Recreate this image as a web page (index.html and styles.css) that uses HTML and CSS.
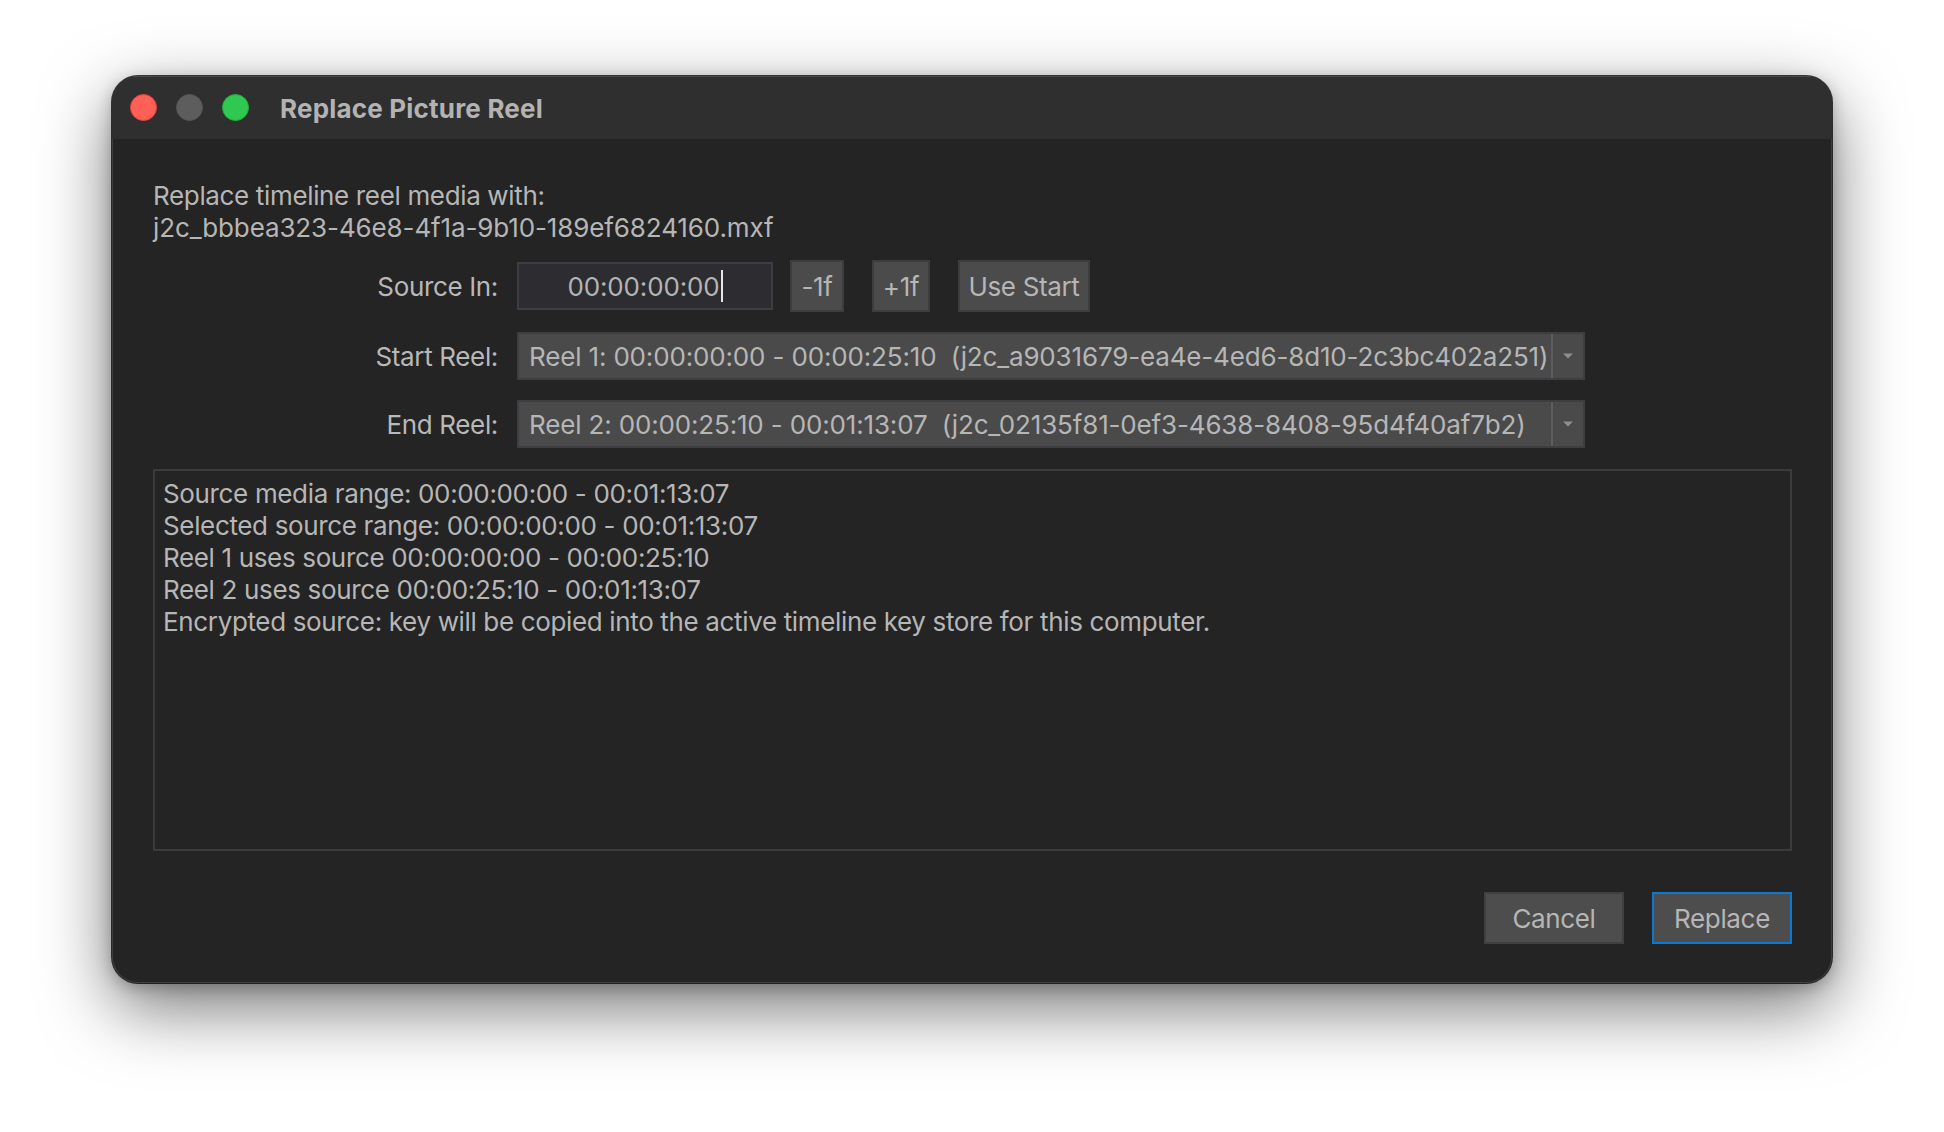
FILE: index.html
```html
<!DOCTYPE html>
<html lang="en">
<head>
<meta charset="utf-8">
<title>Replace Picture Reel</title>
<link rel="stylesheet" href="styles.css">
</head>
<body>
<div class="window">
  <div class="titlebar">
    <div class="lights">
      <span class="light light-red"></span>
      <span class="light light-gray"></span>
      <span class="light light-green"></span>
    </div>
    <div class="title">Replace Picture Reel</div>
  </div>
  <div class="content">
    <div class="intro">
      <div>Replace timeline reel media with:</div>
      <div class="filename">j2c_bbbea323-46e8-4f1a-9b10-189ef6824160.mxf</div>
    </div>
    <div class="form">
      <div class="row row-source">
        <div class="label">Source In:</div>
        <div class="field"><span class="field-text">00:00:00:00</span><span class="caret"></span></div>
        <button class="btn btn-minus">-1f</button>
        <button class="btn btn-plus">+1f</button>
        <button class="btn btn-usestart">Use Start</button>
      </div>
      <div class="row row-reel">
        <div class="label">Start Reel:</div>
        <div class="combo">
          <span class="combo-text">Reel 1: 00:00:00:00 - 00:00:25:10  (j2c_a9031679-ea4e-4ed6-8d10-2c3bc402a251)</span>
          <span class="combo-drop"><svg class="arrow" width="10" height="6" viewBox="0 0 10 6"><path d="M0 0.5 L10 0.5 L5 5.5 Z" fill="#8e8e8e"/></svg></span>
        </div>
      </div>
      <div class="row row-reel">
        <div class="label">End Reel:</div>
        <div class="combo">
          <span class="combo-text">Reel 2: 00:00:25:10 - 00:01:13:07  (j2c_02135f81-0ef3-4638-8408-95d4f40af7b2)</span>
          <span class="combo-drop"><svg class="arrow" width="10" height="6" viewBox="0 0 10 6"><path d="M0 0.5 L10 0.5 L5 5.5 Z" fill="#8e8e8e"/></svg></span>
        </div>
      </div>
    </div>
    <div class="log">
      <div>Source media range: 00:00:00:00 - 00:01:13:07</div>
      <div>Selected source range: 00:00:00:00 - 00:01:13:07</div>
      <div>Reel 1 uses source 00:00:00:00 - 00:00:25:10</div>
      <div>Reel 2 uses source 00:00:25:10 - 00:01:13:07</div>
      <div>Encrypted source: key will be copied into the active timeline key store for this computer.</div>
    </div>
    <div class="footer">
      <button class="btn btn-dialog">Cancel</button>
      <button class="btn btn-dialog btn-default">Replace</button>
    </div>
  </div>
</div>
</body>
</html>
```

FILE: styles.css
```css
html, body {
  margin: 0;
  padding: 0;
}

body {
  background: #ffffff;
  width: 1944px;
  height: 1132px;
  overflow: hidden;
  font-family: "Inter", "Liberation Sans", sans-serif;
  font-size: 26px;
  letter-spacing: -0.35px;
  color: #b6b6b6;
}

.window {
  margin: 76px 0 0 112px;
  width: 1720px;
  height: 907px;
  border-radius: 26px;
  overflow: hidden;
  background: #242424;
  box-shadow:
    0 0 0 1px rgba(0, 0, 0, 0.75),
    inset 0 0 0 1px rgba(255, 255, 255, 0.12),
    0 24px 70px rgba(0, 0, 0, 0.55),
    0 4px 16px rgba(0, 0, 0, 0.25);
  display: flex;
  flex-direction: column;
}

.titlebar {
  height: 63px;
  flex: none;
  background: #2f2f2f;
  display: flex;
  align-items: center;
  box-shadow: inset 0 1px 0 rgba(255, 255, 255, 0.12);
}

.lights {
  display: flex;
  gap: 19px;
  padding-left: 18px;
}

.light {
  width: 27px;
  height: 27px;
  border-radius: 50%;
  box-sizing: border-box;
}

.light-red {
  background: #fe5f57;
  border: 1px solid #e0443e;
}

.light-gray {
  background: #5d5d5d;
  border: 1px solid #555555;
}

.light-green {
  background: #2fc850;
  border: 1px solid #27aa40;
}

.title {
  margin-left: 31px;
  font-weight: 700;
  font-size: 26px;
  letter-spacing: 0.2px;
  color: #b3b3b3;
  padding-top: 1px;
}

.content {
  flex: 1;
  padding: 41px 40px 39px 41px;
  display: flex;
  flex-direction: column;
}

.intro {
  line-height: 32px;
}

.filename {
  letter-spacing: -0.12px;
}

.form {
  margin-top: 16px;
  display: flex;
  flex-direction: column;
  gap: 20px;
}

.row {
  display: flex;
  align-items: center;
}

.row-source {
  height: 52px;
}

.row-reel {
  height: 48px;
}

.label {
  width: 345px;
  margin-right: 19px;
  text-align: right;
  color: #b8b8b8;
  flex: none;
}

.field {
  width: 256px;
  height: 48px;
  box-sizing: border-box;
  background: #2c2c31;
  border: 2px solid #3d3d42;
  display: flex;
  align-items: center;
  justify-content: center;
  color: #b4b4b4;
  letter-spacing: -0.15px;
}

.caret {
  width: 2px;
  height: 32px;
  background: #e6e6e6;
  margin-left: 1px;
}

.btn {
  font-family: "Inter", "Liberation Sans", sans-serif;
  font-size: 26px;
  letter-spacing: -0.35px;
  color: #b6b6b6;
  background: #4b4b4b;
  border: 2px solid #3d3d41;
  height: 52px;
  box-sizing: border-box;
  padding: 0;
  margin: 0;
  display: flex;
  align-items: center;
  justify-content: center;
  border-radius: 0;
  flex: none;
}

.btn-minus {
  width: 54px;
  margin-left: 17px;
}

.btn-plus {
  width: 58px;
  margin-left: 28px;
}

.btn-usestart {
  width: 132px;
  margin-left: 28px;
}

.combo {
  width: 1068px;
  height: 48px;
  box-sizing: border-box;
  background: #4a4a4a;
  border: 2px solid #3e3e42;
  display: flex;
  align-items: center;
}

.combo-text {
  flex: 1;
  white-space: pre;
  padding-left: 10px;
  color: #b6b6b6;
  letter-spacing: -0.16px;
  overflow: hidden;
}

.combo-drop {
  width: 30px;
  height: 44px;
  border-left: 2px solid #5c5c5c;
  display: flex;
  align-items: center;
  justify-content: center;
  flex: none;
}

.arrow {
  display: block;
  filter: blur(0.4px);
}

.log {
  margin-top: 21px;
  height: 382px;
  box-sizing: border-box;
  border: 2px solid #3b3b3e;
  padding: 7px 8px;
  line-height: 32px;
  color: #b6b6b6;
}

.footer {
  margin-top: 41px;
  display: flex;
  justify-content: flex-end;
  gap: 28px;
}

.btn-dialog {
  width: 140px;
  height: 52px;
  background: #4d4d4d;
  border-color: #3f3f44;
}

.btn-default {
  border-color: #0b78d4;
}
```
